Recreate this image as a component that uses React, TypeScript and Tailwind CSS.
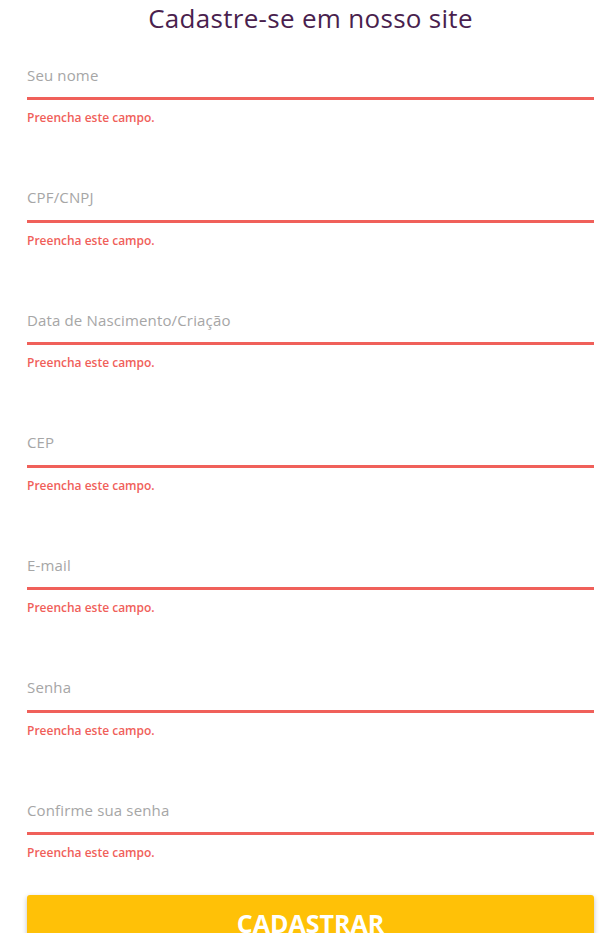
import React from "react";

const fields = [
  "Seu nome",
  "CPF/CNPJ",
  "Data de Nascimento/Criação",
  "CEP",
  "E-mail",
  "Senha",
  "Confirme sua senha",
];

export default function App() {
  return (
    <div className="min-h-[933px] bg-white" style={{ fontFamily: "'Open Sans', 'Noto Sans', sans-serif" }}>
      <div className="ml-[27px] w-[567px]">
        <h1 className="h-[36px] text-center text-[26px] leading-[36px] font-normal tracking-[0.3px] text-[#4a1f4e]">
          Cadastre-se em nosso site
        </h1>
        <form className="mt-[18px] flex flex-col" onSubmit={(e) => e.preventDefault()}>
          {fields.map((f) => (
            <div key={f} className="mb-[50.5px] flex flex-col">
              <input
                placeholder={f}
                className="h-[46px] w-full border-b-[3px] border-[#f0605a] bg-transparent pb-[2px] text-[15px] tracking-[0.15px] text-[#555] outline-none placeholder:text-[#a6a6a6]"
              />
              <span className="mt-[10px] h-[16px] text-[12px] leading-[16px] font-semibold text-[#f0605a]">
                Preencha este campo.
              </span>
            </div>
          ))}
          <button
            type="submit"
            className="-mt-[16.5px] w-full rounded-[3px] bg-[#ffc107] pt-[10px] pb-[10px] text-[25px] leading-[36px] font-bold text-white shadow-[0_2px_5px_rgba(0,0,0,0.25)]"
          >
            CADASTRAR
          </button>
        </form>
      </div>
    </div>
  );
}
